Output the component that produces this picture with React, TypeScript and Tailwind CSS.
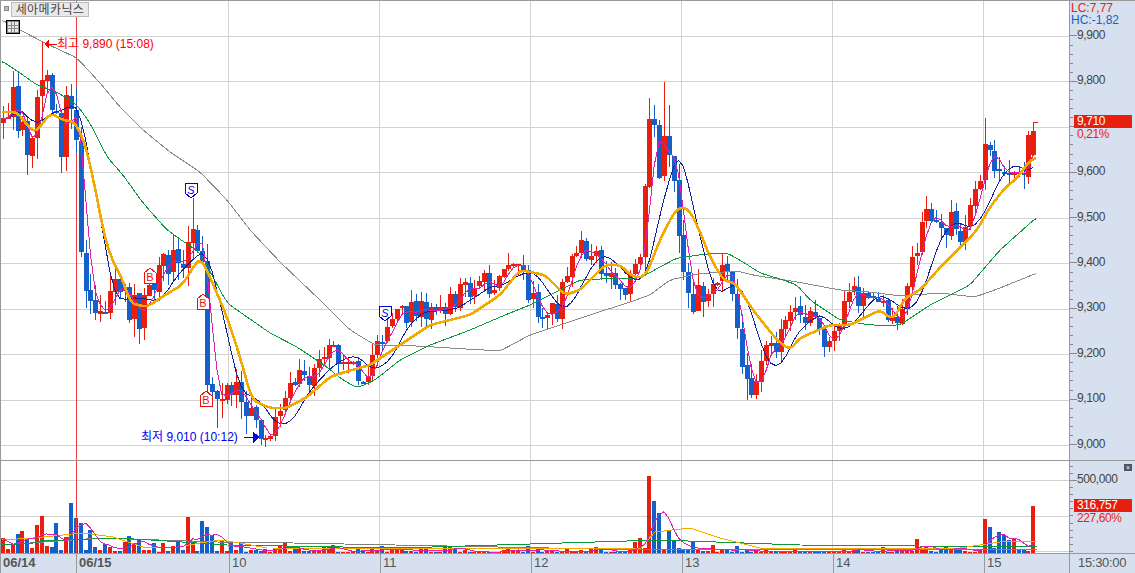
const W = 1068;
const RED = '#e81e0e';
const BLUE = '#1560c8';

type Pt = [number, number];

// seeded so the picture is the same on every load
let seed = 20170615;
const rnd = () => {
  seed = (seed * 1664525 + 1013904223) % 4294967296;
  return seed / 4294967296;
};

const interp = (path: Pt[], x: number) => {
  if (x <= path[0][0]) return path[0][1];
  for (let i = 1; i < path.length; i++) {
    if (x <= path[i][0]) {
      const [x0, y0] = path[i - 1];
      const [x1, y1] = path[i];
      return y0 + ((y1 - y0) * (x - x0)) / (x1 - x0);
    }
  }
  return path[path.length - 1][1];
};

const toPoints = (path: Pt[]) => path.map(([x, y]) => `${x},${y.toFixed(1)}`).join(' ');

// resample a hand-read line and round off its corners
const smooth = (path: Pt[]): Pt[] => {
  const start = path[0][0];
  const end = path[path.length - 1][0];
  const out: Pt[] = [];
  for (let x = start; x <= end; x += 2) {
    let sum = 0;
    let n = 0;
    for (let d = -4; d <= 4; d += 2) {
      sum += interp(path, Math.min(end, Math.max(start, x + d)));
      n++;
    }
    out.push([x, sum / n]);
  }
  return out;
};

const pricePath: Pt[] = [
  [2, 125], [10, 105], [15, 100], [25, 160], [35, 120], [42, 60], [46, 48], [52, 100], [60, 145], [68, 110], [75, 125],
  [79, 175], [82, 285], [90, 310], [100, 320], [110, 290], [120, 295], [130, 305], [140, 312], [150, 280], [165, 265],
  [185, 262], [190, 222], [197, 232], [203, 270], [206, 390], [212, 405], [225, 405], [240, 392], [250, 412], [262, 430],
  [272, 430], [285, 400], [300, 380], [320, 365], [335, 350], [350, 365], [360, 380], [372, 360], [385, 340], [395, 315],
  [420, 310], [440, 310], [470, 285], [490, 285], [512, 255], [525, 285], [540, 315], [555, 315], [570, 260], [590, 245],
  [605, 275], [625, 300], [640, 255], [646, 170], [651, 112], [658, 170], [664, 145], [675, 200], [682, 285], [695, 300],
  [710, 280], [725, 270], [735, 300], [745, 380], [752, 385], [765, 345], [780, 340], [795, 315], [815, 325], [830, 350],
  [845, 300], [865, 292], [880, 305], [895, 320], [905, 305], [915, 250], [925, 210], [940, 240], [952, 210], [965, 240],
  [985, 150], [1000, 165], [1010, 180], [1025, 160], [1033, 132],
];

const ampAt = (x: number) => {
  if (x < 80) return 42;
  if (x < 250) return 34;
  if (x > 640 && x < 680) return 38;
  if (x > 680 && x < 760) return 28;
  if (x > 910) return 26;
  return 22;
};

const volPath: Pt[] = [
  [0, 18], [20, 15], [40, 26], [60, 25], [72, 30], [85, 25], [110, 15], [135, 15], [160, 8], [187, 16], [203, 22],
  [225, 10], [260, 8], [300, 8], [350, 5], [500, 5], [630, 6], [647, 50], [655, 40], [665, 25], [680, 15], [720, 6],
  [900, 4], [912, 12], [940, 6], [975, 8], [985, 24], [1000, 20], [1015, 12], [1030, 16],
];

type Candle = { x: number; open: number; close: number; high: number; low: number; vol: number };

const candles: Candle[] = [];
let prev = 125;
for (let i = 0; i < 213; i++) {
  const x = 3 + i * 4.86;
  const amp = ampAt(x);
  const close = interp(pricePath, x) + (rnd() - 0.5) * amp * 1.1;
  const open = prev + (rnd() - 0.5) * 3;
  const top = Math.min(open, close);
  const bottom = Math.max(open, close);
  const v = rnd();
  candles.push({
    x,
    open,
    close,
    high: top - rnd() * amp * 0.55,
    low: bottom + rnd() * amp * 0.55,
    vol: interp(volPath, x) * (0.12 + v * v * 1.25),
  });
  prev = close;
}

const nearest = (x: number) => candles.reduce((a, b) => (Math.abs(b.x - x) < Math.abs(a.x - x) ? b : a));

// the wicks that stand out in the picture
const wickFixes: [number, number | null, number | null][] = [
  [44, 42, null], [663, 82, null], [651, 98, null], [668, 105, null], [748, null, 400], [271, null, 441],
  [985, 118, null], [192, 198, null], [215, null, 428],
];
for (const [x, hi, lo] of wickFixes) {
  const c = nearest(x);
  if (hi !== null) c.high = hi;
  if (lo !== null) c.low = lo;
}

// the volume bars that stand out
const volFixes: Pt[] = [
  [41, 37], [36, 28], [72, 50], [76, 35], [82, 30], [187, 36], [203, 32], [208, 26], [647, 77], [652, 52], [657, 40],
  [985, 34], [990, 26], [1006, 18],
];
for (const [x, h] of volFixes) nearest(x).vol = h;

const last = candles[candles.length - 1];
last.close = 131;
last.open = 155;
last.high = 122;
last.low = 156;
last.vol = 47;

const movingAvg = (values: number[], n: number) =>
  values.map((_, i) => {
    const s = values.slice(Math.max(0, i - n + 1), i + 1);
    return s.reduce((a, b) => a + b, 0) / s.length;
  });

const closes = candles.map((c) => c.close);
const ma3 = movingAvg(movingAvg(closes, 3), 2);
const ma7 = movingAvg(movingAvg(closes, 7), 3);
const volMa = movingAvg(movingAvg(candles.map((c) => c.vol), 4), 2);

const grayLine: Pt[] = [
  [2, 20], [20, 30], [43, 42], [77, 58], [100, 83], [120, 107], [143, 130], [170, 152], [200, 172], [227, 200], [250, 230],
  [280, 262], [320, 300], [350, 330], [375, 345], [400, 345], [500, 351], [530, 335], [590, 315], [630, 302], [650, 295],
  [670, 280], [697, 274], [737, 271], [753, 275], [797, 282], [840, 290], [870, 292], [900, 296], [940, 293], [975, 297],
  [1000, 288], [1037, 273],
];
const greenLine: Pt[] = [
  [2, 61], [20, 73], [37, 85], [57, 92], [77, 105], [90, 123], [107, 157], [123, 175], [143, 203], [167, 230], [200, 253],
  [227, 303], [270, 333], [297, 347], [327, 367], [340, 378], [357, 388], [375, 380], [400, 360], [430, 345], [470, 330],
  [505, 315], [530, 305], [580, 280], [620, 278], [640, 278], [660, 267], [677, 258], [707, 254], [727, 253], [743, 262],
  [760, 273], [780, 279], [797, 285], [810, 300], [840, 320], [870, 325], [900, 325], [930, 305], [970, 285], [1000, 250],
  [1037, 217],
];
const orangeLine: Pt[] = [
  [2, 112], [17, 112], [33, 132], [38, 130], [50, 113], [63, 120], [75, 122], [85, 143], [95, 187], [103, 230], [110, 255],
  [125, 285], [130, 303], [147, 307], [165, 295], [182, 285], [200, 257], [210, 277], [227, 317], [240, 357], [252, 400],
  [270, 408], [287, 408], [307, 397], [330, 377], [345, 372], [370, 365], [400, 345], [430, 325], [470, 315], [500, 295],
  [520, 270], [545, 275], [565, 295], [580, 290], [605, 265], [620, 265], [633, 277], [645, 277], [663, 233], [677, 208],
  [688, 208], [698, 227], [710, 257], [723, 280], [735, 283], [753, 310], [777, 340], [790, 350], [800, 338], [830, 325],
  [850, 325], [880, 310], [893, 320], [905, 298], [920, 290], [945, 262], [965, 243], [977, 230], [990, 207], [1005, 188],
  [1018, 177], [1030, 160], [1037, 158],
];

const volGreen: Pt[] = [[2, 545], [33, 543], [40, 541], [117, 538], [167, 541], [227, 545], [400, 548], [660, 540], [800, 545], [1037, 547]];
const volGray: Pt[] = [[2, 545], [100, 538], [217, 542], [293, 543], [600, 549], [900, 550], [1037, 549]];
const volOrange: Pt[] = [
  [2, 540], [33, 538], [83, 533], [113, 537], [143, 547], [173, 548], [200, 543], [220, 540], [240, 543], [267, 548],
  [640, 549], [655, 532], [690, 528], [720, 538], [760, 548], [960, 548], [1000, 542], [1037, 541],
];

const hGrid = [36, 81.4, 126.9, 172.3, 217.8, 263.2, 308.6, 354.1, 399.5, 445];
const vGrid = [228.5, 379.5, 530.5, 681.5, 832.5, 983.5];

function Shield({ x, y, label, color, down }: { x: number; y: number; label: string; color: string; down: boolean }) {
  // x,y = top left of a 13x15 tag; the tip points at the candle
  const pts = down
    ? `${x},${y} ${x + 12},${y} ${x + 12},${y + 10} ${x + 6},${y + 15} ${x},${y + 10}`
    : `${x + 6},${y} ${x + 12},${y + 5} ${x + 12},${y + 15} ${x},${y + 15} ${x},${y + 5}`;
  return (
    <g>
      <polygon points={pts} fill="#fff" stroke={color} strokeWidth="1" shapeRendering="crispEdges" />
      <text x={x + 6} y={down ? y + 10.5 : y + 13} textAnchor="middle" fontSize="11" fill={color} fontStyle={down ? 'italic' : 'normal'}>
        {label}
      </text>
    </g>
  );
}

function PriceChart() {
  return (
    <svg width={W} height={459} viewBox={`1 1 ${W} 459`} className="block">
      <g shapeRendering="crispEdges">
        {hGrid.map((y) => (
          <line key={y} x1="0" x2={W + 1} y1={Math.round(y) + 0.5} y2={Math.round(y) + 0.5} stroke="#d2d2d2" />
        ))}
        {vGrid.map((x) => (
          <line key={x} x1={x} x2={x} y1="0" y2="460" stroke="#d2d2d2" />
        ))}
        <rect x="76" y="0" width="1" height="460" fill="#ee3d3d" />
        {candles.map((c) => {
          const up = c.close < c.open;
          const color = up ? RED : BLUE;
          const top = Math.min(c.open, c.close);
          const h = Math.max(2, Math.abs(c.open - c.close));
          const cx = Math.round(c.x);
          return (
            <g key={c.x}>
              <rect x={cx} y={Math.round(c.high)} width="1" height={Math.round(c.low - c.high)} fill={color} />
              <rect x={cx - 2} y={Math.round(top)} width="5" height={Math.round(h)} fill={color} />
            </g>
          );
        })}
        <polyline points={toPoints(smooth(grayLine))} fill="none" stroke="#8a8a8a" strokeWidth="1" />
        <polyline points={toPoints(smooth(greenLine))} fill="none" stroke="#0a9a3c" strokeWidth="1" />
        <polyline points={toPoints(candles.map((c, i) => [c.x, ma7[i]] as Pt))} fill="none" stroke="#12229c" strokeWidth="1" />
        <polyline points={toPoints(candles.map((c, i) => [c.x, ma3[i]] as Pt))} fill="none" stroke="#e020b0" strokeWidth="1" />
        <polyline points={toPoints(smooth(orangeLine))} fill="none" stroke="#f0aa00" strokeWidth="2.6" />
        <line x1="1034" x2="1038" y1="122.5" y2="122.5" stroke={RED} />
        <polygon points="44,44 49,39 49,49" fill="#ff0000" />
        <line x1="49" x2="57" y1="44.5" y2="44.5" stroke="#ff0000" />
        <line x1="244" x2="254" y1="437.5" y2="437.5" stroke="#0000ee" />
        <polygon points="260,437 253,432 253,443" fill="#0000ee" />
      </g>
      <Shield x={185} y={183} label="S" color="#0000dd" down />
      <Shield x={379} y={306} label="S" color="#0000dd" down />
      <Shield x={144} y={268} label="B" color="#ee1111" down={false} />
      <Shield x={197} y={294} label="B" color="#ee1111" down={false} />
      <Shield x={200} y={391} label="B" color="#ee1111" down={false} />
    </svg>
  );
}

function VolumeChart() {
  const base = 92;
  return (
    <svg width={W} height={92} viewBox={`1 0 ${W} 92`} className="block" shapeRendering="crispEdges">
      {[19.5, 55.5, 90.5].map((y) => (
        <line key={y} x1="0" x2={W + 1} y1={y} y2={y} stroke="#d2d2d2" />
      ))}
      {vGrid.map((x) => (
        <line key={x} x1={x} x2={x} y1="0" y2="92" stroke="#d2d2d2" />
      ))}
      {candles.map((c) => (
        <rect
          key={c.x}
          x={Math.round(c.x) - 2}
          y={Math.round(base - c.vol)}
          width="4"
          height={Math.round(c.vol)}
          fill={c.close < c.open ? RED : BLUE}
        />
      ))}
      <rect x="76" y="0" width="1" height="92" fill="#ee3d3d" />
      <g transform="translate(0,-461)" fill="none" strokeWidth="1">
        <polyline points={toPoints(volGray)} stroke="#808080" />
        <polyline points={toPoints(volGreen)} stroke="#0a9a3c" />
        <polyline points={toPoints(volOrange)} stroke="#f0aa00" />
        <polyline points={toPoints(candles.map((c, i) => [c.x, 553 - volMa[i] * 0.95] as Pt))} stroke="#e020b0" />
      </g>
    </svg>
  );
}

const priceTicks = Array.from({ length: 46 }, (_, i) => 9900 - i * 20);
const volTicks = Array.from({ length: 13 }, (_, i) => 600000 - i * 50000);

const fmt = (n: number) => n.toLocaleString('en-US');

function PriceAxis() {
  return (
    <div className="relative h-[459px] w-[65px] overflow-hidden bg-[#d6e0ee] text-[12px] tracking-[-0.4px] text-[#444]">
      <div className="h-[30.46px] pl-px pt-px text-[12px] leading-[12.3px] tracking-normal">
        <p className="text-[#e81e0e]">LC:7,77</p>
        <p className="text-[#1560c8]">HC:-1,82</p>
      </div>
      {priceTicks.map((p) => (
        <div key={p} className="flex h-[9.088px] items-center">
          <div className={p % 100 === 0 ? 'h-px w-[7px] bg-[#888]' : 'h-px w-[3px] bg-[#888]'} />
          {/* 9,700 sits under the current price tag */}
          {p % 100 === 0 && p !== 9700 && <span className="pb-[2px]">{fmt(p)}</span>}
        </div>
      ))}
      <div className="absolute left-[4px] top-[114px] h-[13px] w-[58px] bg-[#e81e0e] pl-[3px] leading-[12px] text-white">9,710</div>
      <div className="absolute left-[7px] top-[128px] leading-[11px] text-[#e81e0e]">0,21%</div>
    </div>
  );
}

function VolumeAxis() {
  return (
    <div className="relative h-[92px] w-[65px] overflow-hidden bg-[#d6e0ee] pt-[1.44px] text-[12px] tracking-[-0.4px] text-[#444]">
      {volTicks.map((v) => (
        <div key={v} className="flex h-[7.13px] items-center">
          <div className={v === 500000 ? 'h-px w-[7px] bg-[#888]' : 'h-px w-[3px] bg-[#888]'} />
          {v === 500000 && <span className="pb-[2px]">500,000</span>}
        </div>
      ))}
      <div className="absolute left-[54px] top-[3px] flex h-[7px] w-[8px] items-center justify-center bg-[#555] text-[7px] leading-none tracking-normal text-white">×</div>
      <div className="absolute left-[4px] top-[38px] h-[13px] w-[58px] bg-[#e81e0e] pl-[3px] leading-[12px] text-white">316,757</div>
      <div className="absolute left-[7px] top-[52px] leading-[11px] text-[#e81e0e]">227,60%</div>
    </div>
  );
}

const dates = [
  { label: '06/14', w: 'w-[75px]', bold: true },
  { label: '06/15', w: 'w-[153px]', bold: true },
  { label: '10', w: 'w-[151px]', bold: false },
  { label: '11', w: 'w-[151px]', bold: false },
  { label: '12', w: 'w-[151px]', bold: false },
  { label: '13', w: 'w-[151px]', bold: false },
  { label: '14', w: 'w-[151px]', bold: false },
  { label: '15', w: 'w-[85px]', bold: false },
];

export default function App() {
  return (
    <div className="h-[573px] w-[1135px] overflow-hidden border-l border-t border-[#999] bg-white font-['Liberation_Sans','Noto_Sans_CJK_KR',sans-serif]">
      <div className="flex border-b border-[#999]">
        <div className="relative border-r border-[#999]">
          <PriceChart />
          <div className="absolute left-[3px] top-[5px] h-[5px] w-[5px] border border-[#888] bg-[#bbb]" />
          <div className="absolute left-[10px] top-[1px] flex h-[15px] w-[78px] items-center justify-center border border-[#bbb] bg-[#e9e9e9] text-[12px] tracking-[0.4px] text-[#444]">
            세아메카닉스
          </div>
          <div className="absolute left-[5px] top-[19px] grid h-[14px] w-[14px] grid-cols-3 gap-px border border-black bg-[#888] p-px">
            {Array.from({ length: 9 }, (_, i) => (
              <span key={i} className="bg-[#e8e8e8]" />
            ))}
          </div>
          <div className="absolute left-[56px] top-[36px] text-[12px] leading-[14px] text-[#ff0000]">최고 9,890 (15:08)</div>
          <div className="absolute left-[140px] top-[429px] text-[12px] leading-[14px] text-[#0000ee]">최저 9,010 (10:12)</div>
        </div>
        <PriceAxis />
      </div>
      <div className="flex border-b border-[#999]">
        <div className="border-r border-[#999]">
          <VolumeChart />
        </div>
        <VolumeAxis />
      </div>
      <div className="flex h-[19px] bg-[#d6e0ee] text-[13px] leading-[18px] text-[#555]">
        {dates.map((d, i) => (
          <div
            key={d.label}
            className={`${d.w} ${i > 0 ? 'border-l border-[#999]' : ''} pl-[2px] ${d.bold ? 'font-bold' : ''}`}
          >
            {d.label}
          </div>
        ))}
        <div className="flex-1 border-l border-[#999] pl-[8px] tracking-[-0.3px]">15:30:00</div>
      </div>
    </div>
  );
}
